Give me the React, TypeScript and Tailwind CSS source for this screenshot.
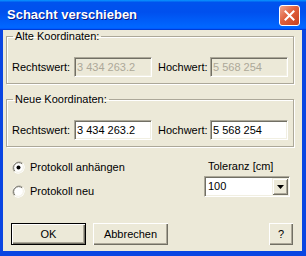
import React from 'react'

const font = { fontFamily: '"Liberation Sans", Arial, sans-serif' }

function Radio({ checked }: { checked?: boolean }) {
  return (
    <svg width="13" height="13" viewBox="0 0 13 13" className="shrink-0">
      <circle cx="6.5" cy="6.5" r="6" fill="#fff" />
      <path d="M2.3 10.7 A6 6 0 0 1 10.7 2.3" fill="none" stroke="#ACA899" strokeWidth="1" />
      <path d="M2.9 10.1 A5.1 5.1 0 0 1 10.1 2.9" fill="none" stroke="#716F64" strokeWidth="1" />
      <path d="M10.7 2.3 A6 6 0 0 1 2.3 10.7" fill="none" stroke="#fff" strokeWidth="1" />
      <path d="M10.1 2.9 A5.1 5.1 0 0 1 2.9 10.1" fill="none" stroke="#F1EFE2" strokeWidth="1" />
      {checked && <circle cx="6.5" cy="6.5" r="2" fill="#000" />}
    </svg>
  )
}

function Field({ value, disabled }: { value: string; disabled?: boolean }) {
  return (
    <div
      className={
        disabled
          ? 'flex h-[20px] w-[78px] items-center border border-t-[#ACA899] border-l-[#ACA899] border-r-white border-b-white bg-[#ECE9D8] pl-[2px] text-[11px] text-[#ACA899] shadow-[inset_1px_1px_0_#716F64,inset_-1px_-1px_0_#F1EFE2]'
          : 'flex h-[20px] w-[78px] items-center border border-t-[#ACA899] border-l-[#ACA899] border-r-white border-b-white bg-white pl-[2px] text-[11px] text-black shadow-[inset_1px_1px_0_#716F64,inset_-1px_-1px_0_#F1EFE2]'
      }
    >
      {value}
    </div>
  )
}

function Group({ title, disabled }: { title: string; disabled?: boolean }) {
  return (
    <fieldset className="ml-[3px] w-[288px] border border-[#ACA899] pl-[5px] pb-[6px] shadow-[inset_1px_1px_0_#fff,1px_1px_0_#fff]">
      <legend className="ml-[1px] px-[2px] text-[11px] leading-[13px] text-black">
        {title}
      </legend>
      <div className="mt-[14px] flex items-center text-[11px] text-black">
        <span className="w-[62px]">Rechtswert:</span>
        <Field value="3 434 263.2" disabled={disabled} />
        <span className="ml-[6px] w-[52px]">Hochwert:</span>
        <Field value="5 568 254" disabled={disabled} />
      </div>
    </fieldset>
  )
}

export default function App() {
  return (
    <div
      className="flex h-[256px] w-[306px] flex-col bg-[#0A45E2]"
      style={font}
    >
      {/* Title bar */}
      <div className="flex h-[30px] shrink-0 items-center justify-between bg-[linear-gradient(180deg,#0997ff,#0053ee_8%,#0050ee_40%,#06f_88%,#06f_93%,#005bff_95%,#003dd7_96%,#003dd7)] pl-[7px] pr-[6px]">
        <span className="text-[13px] font-bold text-white [text-shadow:1px_1px_0_#0A1883]">
          Schacht verschieben
        </span>
        <div className="flex h-[21px] w-[21px] items-center justify-center rounded-[3px] border border-white bg-[linear-gradient(135deg,#F0A58E,#E0603C_45%,#C8401C)]">
          <svg width="11" height="11" viewBox="0 0 11 11">
            <path d="M1.5 1.5 L9.5 9.5 M9.5 1.5 L1.5 9.5" stroke="#fff" strokeWidth="2" strokeLinecap="square" />
          </svg>
        </div>
      </div>

      {/* Body */}
      <div className="mb-[5px] ml-[3px] mr-[4px] flex flex-1 flex-col bg-[#ECE9D8]">
        <Group title="Alte Koordinaten:" disabled />
        <div className="mt-[9px]">
          <Group title="Neue Koordinaten:" />
        </div>

        <div className="mt-[8px] flex pl-[9px] text-[11px] text-black">
          <div className="flex w-[192px] flex-col">
            <div className="flex h-[24px] items-center gap-[5px]">
              <Radio checked />
              <span>Protokoll anhängen</span>
            </div>
            <div className="flex h-[24px] items-center gap-[5px]">
              <Radio />
              <span>Protokoll neu</span>
            </div>
          </div>
          <div className="flex flex-col pt-[4px]">
            <span className="pl-[4px] leading-[14px]">Toleranz [cm]</span>
            <div className="mt-[3px] flex h-[21px] w-[86px] items-center justify-between border border-t-[#ACA899] border-l-[#ACA899] border-r-white border-b-white bg-white pl-[3px] pr-[1px] shadow-[inset_1px_1px_0_#716F64,inset_-1px_-1px_0_#F1EFE2]">
              <span>100</span>
              <div className="flex h-[17px] w-[16px] items-center justify-center bg-[#ECE9D8] shadow-[inset_1px_1px_0_#F1EFE2,inset_-1px_-1px_0_#716F64,inset_2px_2px_0_#fff,inset_-2px_-2px_0_#ACA899]">
                <svg width="7" height="4" viewBox="0 0 7 4">
                  <path d="M0 0 H7 L3.5 4 Z" fill="#000" />
                </svg>
              </div>
            </div>
          </div>
        </div>

        <div className="mt-[20px] flex justify-between pl-[8px] pr-[9px] text-[11px] text-black">
          <div className="flex gap-[7px]">
            <button className="h-[22px] w-[75px] border border-black bg-[#ECE9D8] shadow-[inset_1px_1px_0_#fff,inset_-1px_-1px_0_#716F64,inset_-2px_-2px_0_#ACA899]">
              OK
            </button>
            <button className="h-[22px] w-[75px] bg-[#ECE9D8] shadow-[inset_1px_1px_0_#fff,inset_-1px_-1px_0_#716F64,inset_-2px_-2px_0_#ACA899]">
              Abbrechen
            </button>
          </div>
          <button className="h-[22px] w-[24px] bg-[#ECE9D8] shadow-[inset_1px_1px_0_#fff,inset_-1px_-1px_0_#716F64,inset_-2px_-2px_0_#ACA899]">
            ?
          </button>
        </div>
      </div>
    </div>
  )
}
